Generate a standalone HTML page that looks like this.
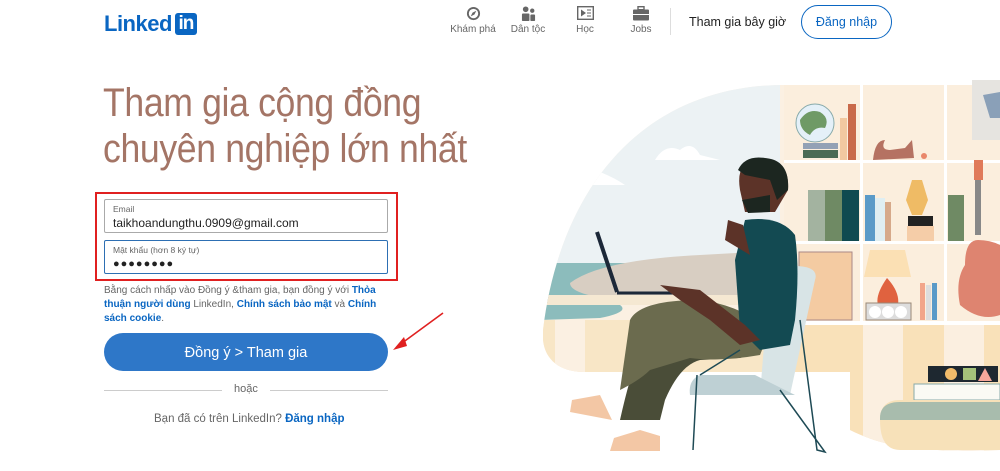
<!DOCTYPE html>
<html><head><meta charset="utf-8">
<style>
*{margin:0;padding:0;box-sizing:border-box}
body{width:1000px;height:471px;overflow:hidden;background:#fff;font-family:"Liberation Sans","Noto Sans CJK SC",sans-serif;position:relative;color:#000}
.abs{position:absolute}
.logo{left:104px;top:11px;font-size:22px;font-weight:bold;color:#0a66c2;letter-spacing:-0.5px;display:flex;align-items:center}
.logo .in{background:#0a66c2;color:#fff;border-radius:3px;width:22px;height:22px;font-size:19px;line-height:22px;text-align:center;margin-left:3px;letter-spacing:-1px}
.nav{top:5px;font-size:10px;color:#666;text-align:center}
.nav .ic{height:16px;display:flex;justify-content:center;align-items:center;margin-bottom:3px}
h1{position:absolute;left:103px;top:80px;font-size:40px;font-weight:normal;color:#a47566;line-height:46px;letter-spacing:-0.4px;transform:scaleX(0.89);transform-origin:0 0;white-space:nowrap}
.field{position:absolute;left:104px;width:284px;border:1px solid #999;border-radius:2px;background:#fff}
.field .lbl{position:absolute;left:8px;top:4px;font-size:8.5px;color:#666}
.field .val{position:absolute;left:8px;top:16px;font-size:12px;color:#222}
.terms{position:absolute;left:104px;top:284px;width:290px;font-size:10px;line-height:14px;color:#666}
.terms b{color:#0a66c2}
.btn{position:absolute;left:104px;top:333px;width:284px;height:38px;border-radius:19px;background:#2e77c8;color:#fff;font-size:14.5px;text-align:center;line-height:40px}
</style></head><body>
<div class="abs logo">Linked<span class="in">in</span></div>

<div class="abs nav" style="left:448px;width:50px"><div class="ic"><svg width="15" height="15" viewBox="0 0 16 16"><circle cx="8" cy="8" r="7" fill="#666"/><circle cx="8" cy="8" r="5" fill="#fff"/><path d="M11 5 L9 9 L5 11 L7 7Z" fill="#666"/></svg></div>Khám phá</div>
<div class="abs nav" style="left:508px;width:40px"><div class="ic"><svg width="15" height="15" viewBox="0 0 16 16"><circle cx="5" cy="3.5" r="3" fill="#666"/><circle cx="12" cy="5" r="2.3" fill="#666"/><rect x="1" y="8" width="8" height="8" rx="1" fill="#666"/><rect x="10" y="9" width="5" height="7" rx="1" fill="#666"/></svg></div>Dân tộc</div>
<div class="abs nav" style="left:565px;width:40px"><div class="ic"><svg width="17" height="14" viewBox="0 0 17 14"><rect x="0.7" y="0.7" width="15.6" height="12.6" fill="none" stroke="#666" stroke-width="1.4"/><path d="M4 3.5 L9 7 L4 10.5Z" fill="#666"/><path d="M10 4h4M10 7h4M10 10h4" stroke="#666"/></svg></div>Học</div>
<div class="abs nav" style="left:621px;width:40px"><div class="ic"><svg width="16" height="15" viewBox="0 0 16 15"><rect x="5" y="0.7" width="6" height="3" fill="none" stroke="#666" stroke-width="1.4"/><rect x="0" y="3.5" width="16" height="11" rx="1" fill="#666"/><rect x="0" y="8" width="16" height="1" fill="#fff"/></svg></div>Jobs</div>
<div class="abs" style="left:670px;top:8px;width:1px;height:27px;background:#ddd"></div>
<div class="abs" style="left:689px;top:15px;font-size:12.5px;color:#222">Tham gia bây giờ</div>
<div class="abs" style="left:801px;top:5px;width:91px;height:34px;border:1px solid #0a66c2;border-radius:17px;color:#0a66c2;font-size:12.5px;text-align:center;line-height:32px">Đăng nhập</div>

<h1>Tham gia cộng đồng<br>chuyên nghiệp lớn nhất</h1>

<div class="abs" style="left:95px;top:192px;width:303px;height:89px;border:2px solid #e02020"></div>
<div class="field" style="top:199px;height:34px;border-color:#aaa"><div class="lbl">Email</div><div class="val">taikhoandungthu.0909@gmail.com</div></div>
<div class="field" style="top:240px;height:34px;border:1.5px solid #2d6fb3"><div class="lbl">Mật khẩu (hơn 8 ký tự)</div><div class="val" style="letter-spacing:1px;font-size:11px;top:17px">●●●●●●●●</div></div>

<div class="terms">Bằng cách nhấp vào Đồng ý &amp;tham gia, bạn đồng ý với <b>Thỏa thuận người dùng</b> LinkedIn, <b>Chính sách bảo mật</b> và <b>Chính sách cookie</b>.</div>

<div class="btn">Đồng ý &gt; Tham gia</div>
<svg class="abs" style="left:390px;top:310px" width="56" height="45"><line x1="53" y1="3" x2="8" y2="36" stroke="#e02020" stroke-width="1.6"/><path d="M3 40 L14 27 L17 36Z" fill="#e02020"/></svg>

<div class="abs" style="left:104px;top:390px;width:118px;height:1px;background:#ccc"></div>
<div class="abs" style="left:234px;top:383px;font-size:11px;color:#666">hoặc</div>
<div class="abs" style="left:270px;top:390px;width:118px;height:1px;background:#ccc"></div>
<div class="abs" style="left:154px;top:413px;font-size:11.5px;color:#666">Bạn đã có trên LinkedIn? <span style="color:#0a66c2;font-weight:bold">Đăng nhập</span></div>

<svg class="abs" style="left:0;top:0" width="1000" height="471" viewBox="0 0 1000 471">
<defs><clipPath id="blob"><path d="M779 85 C640 88 560 190 543 330 L543 340 C545 360 560 372 585 372 L850 372 L850 430 C890 450 930 452 1000 450 L1000 85 Z"/></clipPath></defs>
<g clip-path="url(#blob)">
<rect x="520" y="80" width="480" height="400" fill="#fbf0e2"/>
<rect x="540" y="80" width="240" height="190" fill="#ecf2f4"/>
<path d="M655 160 Q665 143 680 150 Q692 140 700 155 L720 160 L655 160Z" fill="#fff"/>
<path d="M540 185 Q590 182 600 172 Q615 178 625 185Z" fill="#fff"/>
<rect x="540" y="263" width="250" height="40" fill="#8cbcbc"/>
<path d="M570 283 Q600 260 700 255 L790 250 L790 305 L620 300 Q570 295 570 283Z" fill="#d8cec2"/>
<rect x="540" y="295" width="250" height="10" fill="#f5e8d2"/>
<path d="M540 305 L620 305 Q630 312 600 318 L540 320Z" fill="#8cbcbc"/>
<rect x="540" y="320" width="250" height="55" fill="#f8e6c6"/>
<rect x="555" y="320" width="30" height="55" fill="#fbf0e2"/>
<rect x="784" y="85" width="216" height="240" fill="#fbeedd"/>
<rect x="784" y="160" width="216" height="3" fill="#fff"/><rect x="784" y="241" width="216" height="3" fill="#fff"/><rect x="784" y="321" width="216" height="4" fill="#fff"/>
<rect x="860" y="85" width="3" height="240" fill="#fff"/><rect x="944" y="85" width="3" height="240" fill="#fff"/>
<rect x="784" y="325" width="216" height="130" fill="#f9e1b9"/>
<rect x="863" y="325" width="40" height="130" fill="#fbefe0"/><rect x="944" y="325" width="40" height="130" fill="#fbefe0"/>
</g>
<rect x="972" y="80" width="28" height="60" fill="#e6e4e0"/>
<path d="M983 95 L1000 92 L1000 118 L990 118Z" fill="#8aa0b8"/>
<circle cx="815" cy="123" r="19" fill="#e4f0f8" stroke="#8aa" /><path d="M800 120 Q808 108 820 112 Q830 118 825 128 Q815 126 810 135 Q800 130 800 120Z" fill="#6f9a66"/>
<rect x="803" y="143" width="35" height="6" fill="#93a1b5"/><rect x="803" y="150" width="35" height="8" fill="#4a6b55"/>
<rect x="848" y="104" width="8" height="56" fill="#c96a4a"/><rect x="840" y="118" width="7" height="42" fill="#f2c9a0"/>
<path d="M873 160 Q875 140 885 140 Q880 150 890 150 L905 148 L912 140 L914 158 L873 160Z" fill="#b57262"/><circle cx="924" cy="156" r="3" fill="#e9876a"/>
<rect x="808" y="190" width="17" height="51" fill="#a3b3a0"/><rect x="825" y="190" width="17" height="51" fill="#6f8a64"/><rect x="842" y="190" width="17" height="51" fill="#104a50"/>
<rect x="865" y="195" width="10" height="46" fill="#5a9ac8"/><rect x="875" y="198" width="10" height="43" fill="#dfeef2"/><rect x="885" y="202" width="6" height="39" fill="#d6a98a"/>
<path d="M912 180 L922 180 L928 200 L922 215 L912 215 L906 200Z" fill="#efbb65"/><rect x="908" y="216" width="25" height="10" fill="#222"/><rect x="907" y="226" width="27" height="15" fill="#f5cda8"/>
<rect x="948" y="195" width="16" height="46" fill="#6f8a64"/>
<rect x="799" y="252" width="53" height="68" fill="#f4cba2" stroke="#a88"/>
<path d="M870 250 L905 250 L911 277 L864 277Z" fill="#fbe0b4"/><path d="M887 278 Q875 295 878 305 L898 305 Q900 292 887 278Z" fill="#e0623f"/>
<rect x="866" y="303" width="45" height="17" fill="#ddd" stroke="#987"/>
<circle cx="875" cy="312" r="6" fill="#fff"/><circle cx="888" cy="312" r="6" fill="#fff"/><circle cx="901" cy="312" r="6" fill="#fff"/>
<rect x="920" y="283" width="5" height="37" fill="#f2a58a"/><rect x="926" y="285" width="5" height="35" fill="#ddd"/><rect x="932" y="283" width="5" height="37" fill="#5a9ac8"/>
<rect x="975" y="165" width="6" height="70" fill="#888"/><rect x="974" y="160" width="9" height="20" fill="#e07a5a"/>
<path d="M978 240 Q965 240 965 265 Q955 280 960 305 Q980 322 1000 315 L1000 245 Q990 240 978 240Z" fill="#de8470"/>
<rect x="928" y="366" width="70" height="16" fill="#1e2830"/><circle cx="951" cy="374" r="6" fill="#f2bc6a"/><rect x="963" y="368" width="13" height="12" fill="#a5c27a"/><path d="M978 381 L985 368 L992 381Z" fill="#f5a69a"/>
<rect x="914" y="384" width="86" height="16" fill="#fafaf4" stroke="#8aa"/>
<path d="M900 400 L1000 400 L1000 450 L900 450 Q880 450 880 420 Q880 400 900 400Z" fill="#f7e1b9"/>
<path d="M880 418 Q880 402 900 402 L1000 402 L1000 420 L880 420Z" fill="#a8bcad"/>
<line x1="597" y1="232" x2="617" y2="292" stroke="#1c2838" stroke-width="4"/><line x1="617" y1="293" x2="683" y2="293" stroke="#1c2838" stroke-width="3"/>
<path d="M770 270 L790 266 Q820 265 815 280 L790 395 L760 395Z" fill="#d8e4e6"/>
<path d="M700 375 L755 375 L795 395 L690 395 Q688 380 700 375Z" fill="#bed0d4"/>
<path d="M620 420 Q640 330 660 325 Q700 315 760 330 Q770 350 740 358 L700 360 Q680 365 665 400 L660 420Z" fill="#4a4d38"/>
<path d="M630 320 Q640 300 700 300 Q740 305 770 330 L760 355 Q720 362 690 358 L650 370 Q640 380 620 390Z" fill="#6b6b4e"/>
<path d="M745 220 Q780 215 795 235 Q800 270 795 320 L790 345 L760 350 L740 330 L735 260Z" fill="#134a52"/>
<path d="M743 225 L750 255 L725 240 L728 220Z" fill="#5c3328"/>
<path d="M660 285 L700 290 L745 325 L760 340 L740 345 L710 320 L680 300Z" fill="#5c3328"/>
<path d="M740 190 Q735 160 760 158 Q790 158 788 190 L775 212 L745 212Z" fill="#5c3328"/>
<path d="M738 170 Q745 155 765 158 Q790 160 788 190 L777 200 L770 180 L745 175Z" fill="#1c2620"/>
<path d="M742 200 L770 195 L770 212 L748 213Z" fill="#1c2620"/>
<path d="M572 400 L600 395 L612 420 L570 412Z" fill="#f3c7a5"/><path d="M614 438 L640 430 L660 436 L660 451 L610 451Z" fill="#f3c7a5"/>
<path d="M697 375 L693 450 M800 320 L817 450 L825 452 L780 390 M700 375 L740 350" stroke="#1e4a55" stroke-width="1.5" fill="none"/>
</svg>
</body></html>
